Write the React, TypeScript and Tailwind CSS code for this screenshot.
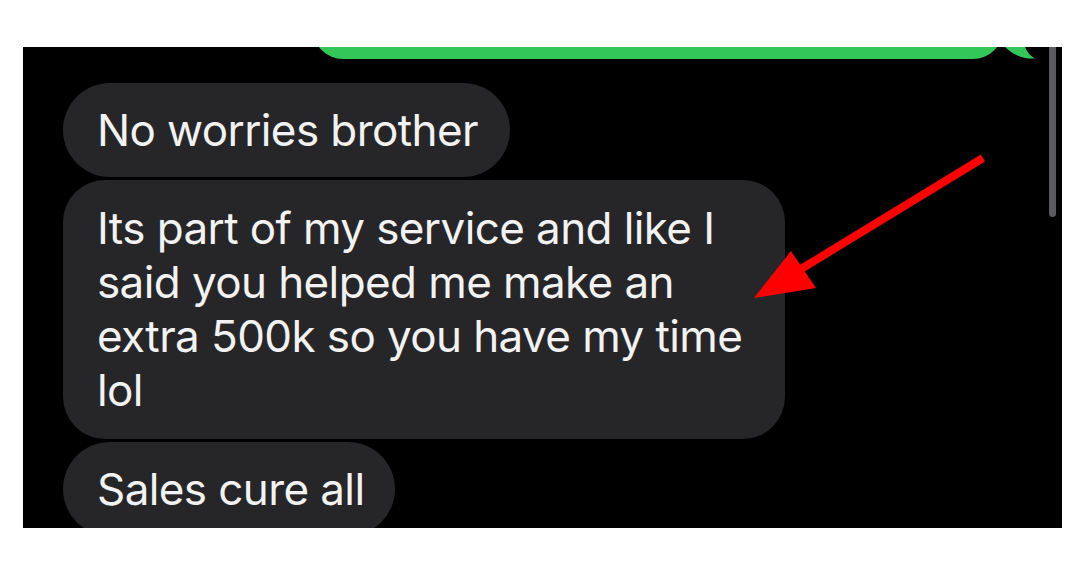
const font = { fontFamily: 'Inter, "Noto Sans", sans-serif' };

function Bubble({ lines, className }: { lines: string[]; className: string }) {
  return (
    <div
      className={`bg-[#262629] text-[#f2f2f2] text-[44px] leading-[54px] tracking-[-0.6px] px-[34px] py-[20px] ${className}`}
    >
      {lines.map((l) => (
        <div key={l} className="whitespace-nowrap">
          {l}
        </div>
      ))}
    </div>
  );
}

export default function App() {
  return (
    <div className="w-[1084px] h-[576px] bg-white pt-[47px] pl-[23px]" style={font}>
      <div className="relative w-[1039px] h-[481px] bg-black overflow-hidden">
        {/* sent bubble, mostly scrolled out */}
        <div className="relative ml-[290px] -mt-[48px] h-[60px] w-[690px]">
          <div className="h-full w-full rounded-[30px] bg-[#33c759]" />
          <svg className="absolute left-full bottom-0" width="34" height="12" viewBox="0 0 34 12">
            <path d="M-2 0 H22 C24 5 27 9 32 11.5 C24 12 15 10 8 5 C6 3 3 1 2 0 Z" fill="#33c759" />
          </svg>
        </div>

        <div className="ml-[40px] mt-[24px] flex flex-col items-start gap-[2px]">
          <Bubble lines={["No worries brother"]} className="rounded-full h-[94px] w-[447px]" />
          <Bubble
            lines={[
              "Its part of my service and like I",
              "said you helped me make an",
              "extra 500k so you have my time",
              "lol",
            ]}
            className="rounded-[42px] w-[722px] h-[259px] pt-[21px] mt-[1px]"
          />
          <Bubble lines={["Sales cure all"]} className="rounded-full h-[94px] w-[332px] mt-[1px]" />
        </div>

        {/* scroll indicator */}
        <div className="absolute left-[1026px] -top-[10px] h-[180px] w-[7px] rounded-full bg-[#5b5b5f]" />

        {/* red annotation arrow */}
        <svg className="absolute left-0 top-0" width="1039" height="481" viewBox="0 0 1039 481">
          <line x1="960" y1="111" x2="778" y2="222" stroke="#ff0000" strokeWidth="8" />
          <polygon points="731,251 768,204 793,241" fill="#ff0000" />
        </svg>
      </div>
    </div>
  );
}
